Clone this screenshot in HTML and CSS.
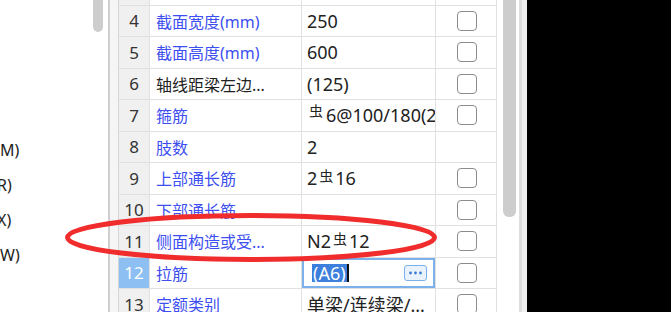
FILE: index.html
```html
<!DOCTYPE html>
<html lang="zh-CN">
<head>
  <meta charset="UTF-8" />
  <title>属性列表</title>
  <link rel="stylesheet" href="styles.css">
</head>
<body>
  <div class="screen">
    <div class="side">
      <div class="side-labels">
        <div class="side-label">M)</div>
        <div class="side-label cut">R)</div>
        <div class="side-label cut">X)</div>
        <div class="side-label">W)</div>
      </div>
      <div class="side-scroll"><div class="side-thumb"></div></div>
    </div>
    <div class="split"></div>
    <div class="gutter"></div>

    <div class="grid-wrap">
      <div class="grid">
        <div class="row">
          <div class="cell num">3</div>
          <div class="cell name">跨数量</div>
          <div class="cell val"></div>
          <div class="cell chk"><span class="box"></span></div>
        </div>
        <div class="row">
          <div class="cell num">4</div>
          <div class="cell name">截面宽度(mm)</div>
          <div class="cell val">250</div>
          <div class="cell chk"><span class="box"></span></div>
        </div>
        <div class="row">
          <div class="cell num">5</div>
          <div class="cell name">截面高度(mm)</div>
          <div class="cell val">600</div>
          <div class="cell chk"><span class="box"></span></div>
        </div>
        <div class="row">
          <div class="cell num">6</div>
          <div class="cell name plain">轴线距梁左边...</div>
          <div class="cell val">(125)</div>
          <div class="cell chk"><span class="box"></span></div>
        </div>
        <div class="row">
          <div class="cell num">7</div>
          <div class="cell name">箍筋</div>
          <div class="cell val"><span class="bar first">虫</span>6@100/180(2)</div>
          <div class="cell chk"><span class="box"></span></div>
        </div>
        <div class="row">
          <div class="cell num">8</div>
          <div class="cell name">肢数</div>
          <div class="cell val">2</div>
          <div class="cell chk"></div>
        </div>
        <div class="row">
          <div class="cell num">9</div>
          <div class="cell name">上部通长筋</div>
          <div class="cell val">2<span class="bar">虫</span>16</div>
          <div class="cell chk"><span class="box"></span></div>
        </div>
        <div class="row">
          <div class="cell num">10</div>
          <div class="cell name">下部通长筋</div>
          <div class="cell val"></div>
          <div class="cell chk"><span class="box"></span></div>
        </div>
        <div class="row">
          <div class="cell num">11</div>
          <div class="cell name">侧面构造或受...</div>
          <div class="cell val">N2<span class="bar">虫</span>12</div>
          <div class="cell chk"><span class="box"></span></div>
        </div>
        <div class="row current">
          <div class="cell num">12</div>
          <div class="cell name">拉筋</div>
          <div class="cell val editing">
            <span class="sel">(A6)</span>
            <span class="more">
              <svg width="15" height="4" viewBox="0 0 15 4"><circle cx="2.5" cy="2" r="1.4"/><circle cx="7.5" cy="2" r="1.4"/><circle cx="12.5" cy="2" r="1.4"/></svg>
            </span>
          </div>
          <div class="cell chk"><span class="box"></span></div>
        </div>
        <div class="row">
          <div class="cell num">13</div>
          <div class="cell name">定额类别</div>
          <div class="cell val">单梁/连续梁/...</div>
          <div class="cell chk"><span class="box"></span></div>
        </div>
      </div>
    </div>

    <div class="vscroll"><div class="vthumb"></div></div>
    <div class="edge"></div>
    <div class="dark"></div>

    <svg class="mark" width="671" height="312" viewBox="0 0 671 312">
      <ellipse cx="251" cy="237.5" rx="183.5" ry="22" />
    </svg>
  </div>
</body>
</html>
```

FILE: styles.css
```css
* {
  box-sizing: border-box;
  margin: 0;
  padding: 0;
}

body {
  background: #000;
  font-family: "Noto Sans", "Noto Sans CJK SC", sans-serif;
  font-size: 16px;
  color: #222;
}

.screen {
  position: relative;
  display: flex;
  width: 671px;
  height: 312px;
  overflow: hidden;
}

/* left tree panel */
.side {
  display: flex;
  width: 108px;
  background: #fff;
}

.side-labels {
  width: 22px;
  padding-top: 133px;
  overflow: hidden;
}

.side-label {
  height: 35px;
  line-height: 35px;
  font-size: 16px;
  white-space: nowrap;
}

.side-label.cut {
  margin-left: -3px;
}

.side-scroll {
  margin-left: auto;
  width: 15px;
  padding-right: 5px;
}

.side-thumb {
  width: 10px;
  height: 32px;
  background: #cdcdcd;
  border-radius: 0 0 5px 5px;
}

.split {
  width: 2px;
  background: #cfcfcf;
}

.gutter {
  width: 9px;
  background: #f5f5f5;
  border-right: 1px solid #d6d6d6;
}

/* property grid */
.grid-wrap {
  width: 378px;
  background: #fff;
}

.grid {
  margin-top: -26px;
  border-right: 1px solid #e0e0e0;
}

.row {
  display: grid;
  grid-template-columns: 31px 152px 134px 61px;
  height: 31.5px;
}

.cell {
  display: flex;
  align-items: center;
  border-right: 1px solid #e0e0e0;
  border-bottom: 1px solid #e0e0e0;
  white-space: nowrap;
  overflow: hidden;
}

.cell.chk {
  border-right: none;
  justify-content: center;
}

.num {
  justify-content: center;
  background: #f0f0f0;
  color: #333;
  font-size: 17px;
}

.name {
  padding-left: 6px;
  color: #3d4ff0;
}

.name.plain {
  color: #222;
}

.val {
  padding-left: 5px;
  font-size: 18px;
}

.bar {
  font-size: 14px;
  position: relative;
  top: -3px;
  margin: 0 2px;
}

.bar.first {
  top: -5px;
  margin: 0 3px 0 2px;
}

.box {
  width: 20px;
  height: 20px;
  border: 1.5px solid #8c8c8c;
  border-radius: 4px;
  background: #fff;
}

.current .num {
  background: #8dbff2;
  color: #fff;
}

.val.editing {
  box-shadow: inset 0 0 0 2px #7ab1ea;
  padding-left: 10px;
  padding-right: 8px;
  overflow: visible;
}

.sel {
  background: #3d7fdc;
  color: #fff;
  line-height: 18px;
  padding: 0 1px;
  border-right: 2px solid #111;
}

.more {
  margin-left: auto;
  display: flex;
  align-items: center;
  justify-content: center;
  width: 23px;
  height: 16px;
  border: 1px solid #7ab1ea;
  border-radius: 3px;
  background: #eaf3fc;
  fill: #3a7bd5;
}

/* right scrollbar and frame */
.vscroll {
  width: 22px;
  background: #fff;
  padding-left: 6px;
}

.vthumb {
  width: 13px;
  height: 217px;
  background: #cdcdcd;
  border-radius: 0 0 6px 6px;
}

.edge {
  width: 8px;
  background: #f0f0f0;
  border-left: 3px solid #dedede;
}

.dark {
  flex: 1;
  background: #000;
}

.mark {
  position: absolute;
  left: 0;
  top: 0;
  fill: none;
  stroke: #f02c2c;
  stroke-width: 5;
}
```
